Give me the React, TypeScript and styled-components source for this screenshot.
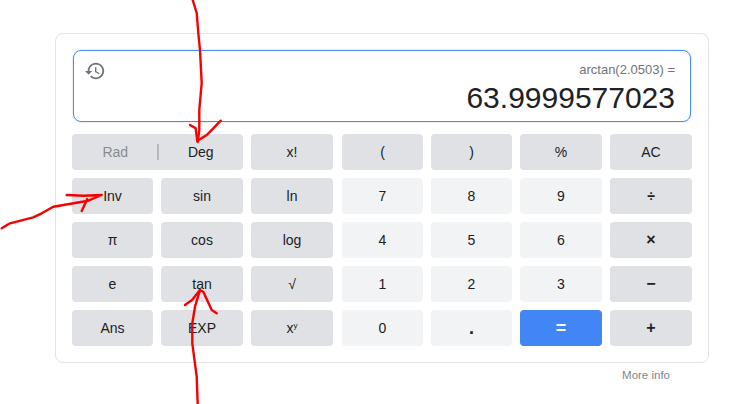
import React from 'react'
import styled, { createGlobalStyle } from 'styled-components'

const GlobalStyle = createGlobalStyle`
  html, body {
    margin: 0;
    padding: 0;
    background: #fff;
    font-family: "Liberation Sans", Arial, sans-serif;
  }
`

type Tone = 'fn' | 'num' | 'accent'

const Page = styled.div`
  position: relative;
  width: 730px;
  height: 404px;
  overflow: hidden;
  padding: 33px 0 0 55px;
  box-sizing: border-box;
`

const Card = styled.div`
  width: 654px;
  height: 330px;
  box-sizing: border-box;
  padding: 16px;
  border: 1px solid #e3e4e7;
  border-radius: 8px;
`

const Display = styled.div`
  height: 72px;
  box-sizing: border-box;
  margin: 0 1px 12px;
  padding: 0 15px 0 10px;
  border: 1px solid #4d8bf4;
  border-radius: 8px;
  box-shadow: 0 0 2px rgba(60, 64, 67, 0.3);
  display: flex;
  justify-content: space-between;
`

const HistoryIcon = styled.svg`
  width: 22px;
  height: 22px;
  margin-top: 9px;
  fill: #70757a;
`

const Readout = styled.div`
  display: flex;
  flex-direction: column;
  align-items: flex-end;
`

const Formula = styled.div`
  margin-top: 11px;
  font-size: 13px;
  line-height: 15px;
  color: #70757a;
`

const Result = styled.div`
  margin-top: 3px;
  font-size: 30px;
  line-height: 36px;
  color: #202124;
`

const Keys = styled.div`
  display: flex;
  gap: 9px;
`

const KeyGroup = styled.div<{ $cols: string }>`
  display: grid;
  grid-template-columns: ${p => p.$cols};
  grid-auto-rows: 36px;
  gap: 8px;
`

const toneBg: Record<Tone, string> = {
  fn: '#dfe1e5',
  num: '#f1f3f4',
  accent: '#4285f4',
}

const Key = styled.div<{ $tone?: Tone; $bold?: boolean; $size?: number }>`
  display: flex;
  align-items: center;
  justify-content: center;
  border-radius: 4px;
  background: ${p => toneBg[p.$tone ?? 'fn']};
  color: ${p => (p.$tone === 'accent' ? '#fff' : '#202124')};
  font-size: ${p => p.$size ?? 14}px;
  font-weight: ${p => (p.$bold ? 700 : 400)};
`

const AngleKey = styled(Key)`
  grid-column: span 2;
`

const AngleOption = styled.span<{ $off?: boolean }>`
  flex: 1;
  text-align: center;
  text-indent: ${p => (p.$off ? 2 : 0)}px;
  color: ${p => (p.$off ? '#888c91' : '#202124')};
`

const AngleDivider = styled.span`
  width: 2px;
  height: 16px;
  background: #b5b8bd;
`

const Power = styled.sup`
  font-size: 8px;
  line-height: 0;
  vertical-align: 5px;
`

const Footer = styled.div`
  width: 654px;
  height: 24px;
  display: flex;
  align-items: center;
  justify-content: flex-end;
  padding-right: 39px;
  box-sizing: border-box;
  font-size: 11.5px;
  color: #80868b;
`

const Scribble = styled.svg`
  position: absolute;
  left: 0;
  top: 0;
  pointer-events: none;
  fill: none;
  stroke: #f60000;
  stroke-width: 2.4;
  stroke-linejoin: round;
  stroke-linecap: round;
`

type KeyDef = { label: React.ReactNode; tone?: Tone; bold?: boolean; size?: number }

const functionKeys: KeyDef[] = [
  { label: 'x!' },
  { label: 'Inv' },
  { label: 'sin' },
  { label: 'ln' },
  { label: 'π' },
  { label: 'cos' },
  { label: 'log' },
  { label: 'e' },
  { label: 'tan' },
  { label: '√' },
  { label: 'Ans' },
  { label: 'EXP' },
  { label: <span>x<Power>y</Power></span> },
]

const numberKeys: KeyDef[] = [
  { label: '(' },
  { label: ')' },
  { label: '%' },
  { label: 'AC' },
  { label: '7', tone: 'num' },
  { label: '8', tone: 'num' },
  { label: '9', tone: 'num' },
  { label: '÷', bold: true },
  { label: '4', tone: 'num' },
  { label: '5', tone: 'num' },
  { label: '6', tone: 'num' },
  { label: '×', bold: true, size: 16 },
  { label: '1', tone: 'num' },
  { label: '2', tone: 'num' },
  { label: '3', tone: 'num' },
  { label: '−', bold: true, size: 16 },
  { label: '0', tone: 'num' },
  { label: '.', tone: 'num', bold: true, size: 18 },
  { label: '=', tone: 'accent', bold: true, size: 18 },
  { label: '+', bold: true, size: 16 },
]

const renderKey = (k: KeyDef, i: number) => (
  <Key key={i} $tone={k.tone} $bold={k.bold} $size={k.size}>
    {k.label}
  </Key>
)

export default function App() {
  return (
    <Page>
      <GlobalStyle />
      <Card>
        <Display>
          <HistoryIcon viewBox="0 0 24 24">
            <path d="M13 3c-4.97 0-9 4.03-9 9H1l3.89 3.89.07.14L9 12H6c0-3.87 3.13-7 7-7s7 3.13 7 7-3.13 7-7 7c-1.93 0-3.68-.79-4.94-2.06l-1.42 1.42C8.27 19.99 10.51 21 13 21c4.97 0 9-4.03 9-9s-4.03-9-9-9zm-1 5v5l4.28 2.54.72-1.21-3.5-2.08V8H12z" />
          </HistoryIcon>
          <Readout>
            <Formula>arctan(2.0503) =</Formula>
            <Result>63.9999577023</Result>
          </Readout>
        </Display>
        <Keys>
          <KeyGroup $cols="81px 82px 82px">
            <AngleKey>
              <AngleOption $off>Rad</AngleOption>
              <AngleDivider />
              <AngleOption>Deg</AngleOption>
            </AngleKey>
            {functionKeys.map(renderKey)}
          </KeyGroup>
          <KeyGroup $cols="81px 81px 82px 82px">{numberKeys.map(renderKey)}</KeyGroup>
        </Keys>
      </Card>
      <Footer>More info</Footer>
      <Scribble width="730" height="404" viewBox="0 0 730 404">
        <path d="M192.7 0 L196.7 13 L198.3 33 L200 50 L201.7 83 L199.3 110 L199.3 130 L197.7 142" />
        <path d="M190 125 L195.7 128.3 L197.3 141 L206.7 135 L213.3 128.3 L220.7 120.7" />
        <path d="M1.7 228.3 L10 223.3 L33.3 217.3 L41.7 213.3 L53.3 206.7 L88.3 200.7 L101.7 195 L83.3 195.7 L66.7 195" />
        <path d="M81.7 211 L87.3 199" />
        <path d="M197.7 404 L196.7 376.7 L192.3 343.3 L192.3 323.3 L195 306.7 L200 290" />
        <path d="M185 305 L192 300 L200 290 L203.3 291.7 L211.7 310 L216.7 313.3" />
      </Scribble>
    </Page>
  )
}
